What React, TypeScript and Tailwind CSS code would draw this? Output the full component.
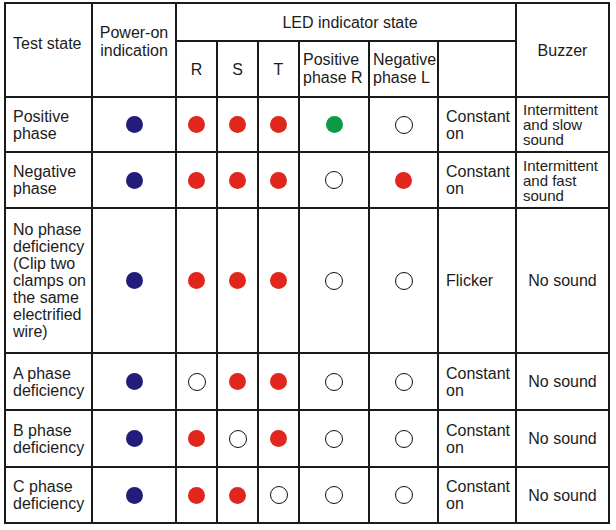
import React from 'react';

type Led = 'blue' | 'red' | 'green' | 'off';

function Dot({ kind }: { kind: Led }) {
  if (kind === 'off') {
    return <span className="block w-[18px] h-[18px] rounded-full border-[1.7px] border-[#111]" />;
  }
  const color =
    kind === 'blue' ? 'bg-[#231c7b]' : kind === 'red' ? 'bg-[#e1261d]' : 'bg-[#0c9a47]';
  return <span className={`block w-[17px] h-[17px] rounded-full ${color}`} />;
}

type Row = {
  state: React.ReactNode;
  leds: Led[];
  mode: React.ReactNode;
  buzzer: React.ReactNode;
  buzzerCentered?: boolean;
  modeCentered?: boolean;
};

const rows: Row[] = [
  {
    state: <>Positive<br />phase</>,
    leds: ['blue', 'red', 'red', 'red', 'green', 'off'],
    mode: <>Constant<br />on</>,
    buzzer: <>Intermittent<br />and slow<br />sound</>,
  },
  {
    state: <>Negative<br />phase</>,
    leds: ['blue', 'red', 'red', 'red', 'off', 'red'],
    mode: <>Constant<br />on</>,
    buzzer: <>Intermittent<br />and fast<br />sound</>,
  },
  {
    state: <>No phase<br />deficiency<br />(Clip two<br />clamps on<br />the same<br />electrified<br />wire)</>,
    leds: ['blue', 'red', 'red', 'red', 'off', 'off'],
    mode: <>Flicker</>,
    buzzer: <>No sound</>,
    buzzerCentered: true,
  },
  {
    state: <>A phase<br />deficiency</>,
    leds: ['blue', 'off', 'red', 'red', 'off', 'off'],
    mode: <>Constant<br />on</>,
    buzzer: <>No sound</>,
    buzzerCentered: true,
  },
  {
    state: <>B phase<br />deficiency</>,
    leds: ['blue', 'red', 'off', 'red', 'off', 'off'],
    mode: <>Constant<br />on</>,
    buzzer: <>No sound</>,
    buzzerCentered: true,
  },
  {
    state: <>C phase<br />deficiency</>,
    leds: ['blue', 'red', 'red', 'off', 'off', 'off'],
    mode: <>Constant<br />on</>,
    buzzer: <>No sound</>,
    buzzerCentered: true,
  },
];

export default function App() {
  const cell = 'bg-white';
  return (
    <div className="w-[616px] h-[530px] bg-white pl-[4px] pt-[2px] text-[#1c1c1c] font-['Liberation_Sans',Arial,sans-serif] text-[16px] leading-[17px]">
      <div className="grid w-fit bg-[#1a1a1a] p-[2px] gap-[2px] grid-cols-[85px_82px_39px_39px_39px_68px_67px_76px_91px] grid-rows-[36px_54px_53px_54px_143px_55px_55px_54px]">
        {/* header */}
        <div className={`${cell} row-span-2 pl-[7px] pt-[31px]`}>Test state</div>
        <div className={`${cell} row-span-2 text-center pt-[20px] leading-[18px]`}>
          Power-on<br />indication
        </div>
        <div className={`${cell} col-span-6 flex items-center justify-center pl-[8px]`}>LED indicator state</div>
        <div className={`${cell} row-span-2 text-center pt-[38px]`}>Buzzer</div>

        <div className={`${cell} flex items-center justify-center`}>R</div>
        <div className={`${cell} flex items-center justify-center`}>S</div>
        <div className={`${cell} flex items-center justify-center`}>T</div>
        <div className={`${cell} flex items-center pl-[3px] leading-[18px]`}>
          <span>Positive<br />phase R</span>
        </div>
        <div className={`${cell} flex items-center pl-[3px] leading-[18px]`}>
          <span>Negative<br />phase L</span>
        </div>
        <div className={cell} />

        {rows.map((r, i) => (
          <React.Fragment key={i}>
            <div className={`${cell} flex items-center pl-[7px]`}>
              <span>{r.state}</span>
            </div>
            {r.leds.map((l, j) => (
              <div key={j} className={`${cell} flex items-center justify-center`}>
                <Dot kind={l} />
              </div>
            ))}
            <div className={`${cell} flex items-center pl-[7px]`}>
              <span>{r.mode}</span>
            </div>
            {r.buzzerCentered ? (
              <div className={`${cell} flex items-center justify-center`}>{r.buzzer}</div>
            ) : (
              <div className={`${cell} flex items-center pl-[6px] text-[15px] leading-[15px]`}>
                <span>{r.buzzer}</span>
              </div>
            )}
          </React.Fragment>
        ))}
      </div>
    </div>
  );
}
